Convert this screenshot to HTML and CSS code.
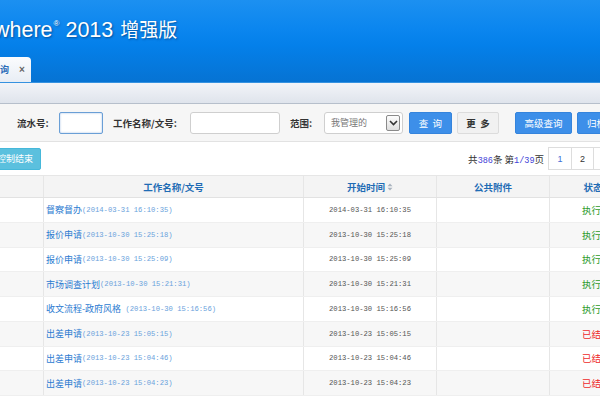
FILE: index.html
```html
<!DOCTYPE html>
<html lang="zh-CN">
<head>
<meta charset="utf-8">
<title>where 2013 增强版</title>
<link rel="stylesheet" href="styles.css">
</head>
<body>
<div class="page">
  <header class="header">
    <div class="title">where<sup class="reg">®</sup> 2013 <span class="title-cn">增强版</span></div>
    <div class="tabs">
      <div class="tab"><span class="tab-text">查询</span><span class="tab-close">×</span></div>
    </div>
  </header>
  <div class="band"></div>
  <div class="toolbar">
    <span class="label lbl-1">流水号:</span>
    <span class="input input-focus input-sn"></span>
    <span class="label lbl-2">工作名称/文号:</span>
    <span class="input input-name"></span>
    <span class="label lbl-3">范围:</span>
    <span class="select"><span class="select-text">我管理的</span><span class="select-arrow"><svg width="9" height="6" viewBox="0 0 9 6"><path d="M1 1 L4.5 4.5 L8 1" fill="none" stroke="#333" stroke-width="1.6"/></svg></span></span>
    <span class="btn btn-blue btn-query">查&nbsp;&nbsp;询</span>
    <span class="btn btn-gray btn-more">更&nbsp;&nbsp;多</span>
    <span class="btn btn-blue btn-adv">高级查询</span>
    <span class="btn btn-blue btn-arch">归档查询</span>
  </div>
  <div class="listbar">
    <span class="btn-info">控制结束</span>
    <div class="pager">
      <span class="pager-info">共<em>386</em>条 第<em>1/39</em>页</span>
      <span class="pg pg-cur">1</span>
      <span class="pg">2</span>
      <span class="pg">3</span>
    </div>
  </div>
  <div class="table">
    <div class="thead">
      <div class="c c0"></div>
      <div class="c c1">工作名称/文号</div>
      <div class="c c2">开始时间<svg class="sort" width="6" height="8" viewBox="0 0 6 8"><path d="M3 0.5 L5.5 3.2 H0.5 Z M3 7.5 L5.5 4.8 H0.5 Z" fill="#a9b3bf"/></svg></div>
      <div class="c c3">公共附件</div>
      <div class="c c4">状态</div>
    </div>
    <div class="row">
      <div class="c c0"></div>
      <div class="c c1"><a class="lnk">督察督办</a><span class="dt">(2014-03-31 16:10:35)</span></div>
      <div class="c c2 tm">2014-03-31 16:10:35</div>
      <div class="c c3"></div>
      <div class="c c4 st-run">执行中</div>
    </div>
    <div class="row">
      <div class="c c0"></div>
      <div class="c c1"><a class="lnk">报价申请</a><span class="dt">(2013-10-30 15:25:18)</span></div>
      <div class="c c2 tm">2013-10-30 15:25:18</div>
      <div class="c c3"></div>
      <div class="c c4 st-run">执行中</div>
    </div>
    <div class="row">
      <div class="c c0"></div>
      <div class="c c1"><a class="lnk">报价申请</a><span class="dt">(2013-10-30 15:25:09)</span></div>
      <div class="c c2 tm">2013-10-30 15:25:09</div>
      <div class="c c3"></div>
      <div class="c c4 st-run">执行中</div>
    </div>
    <div class="row">
      <div class="c c0"></div>
      <div class="c c1"><a class="lnk">市场调查计划</a><span class="dt">(2013-10-30 15:21:31)</span></div>
      <div class="c c2 tm">2013-10-30 15:21:31</div>
      <div class="c c3"></div>
      <div class="c c4 st-run">执行中</div>
    </div>
    <div class="row">
      <div class="c c0"></div>
      <div class="c c1"><a class="lnk">收文流程-政府风格</a><span class="dt"> (2013-10-30 15:16:56)</span></div>
      <div class="c c2 tm">2013-10-30 15:16:56</div>
      <div class="c c3"></div>
      <div class="c c4 st-run">执行中</div>
    </div>
    <div class="row">
      <div class="c c0"></div>
      <div class="c c1"><a class="lnk">出差申请</a><span class="dt">(2013-10-23 15:05:15)</span></div>
      <div class="c c2 tm">2013-10-23 15:05:15</div>
      <div class="c c3"></div>
      <div class="c c4 st-end">已结束</div>
    </div>
    <div class="row">
      <div class="c c0"></div>
      <div class="c c1"><a class="lnk">出差申请</a><span class="dt">(2013-10-23 15:04:46)</span></div>
      <div class="c c2 tm">2013-10-23 15:04:46</div>
      <div class="c c3"></div>
      <div class="c c4 st-end">已结束</div>
    </div>
    <div class="row">
      <div class="c c0"></div>
      <div class="c c1"><a class="lnk">出差申请</a><span class="dt">(2013-10-23 15:04:23)</span></div>
      <div class="c c2 tm">2013-10-23 15:04:23</div>
      <div class="c c3"></div>
      <div class="c c4 st-end">已结束</div>
    </div>
  </div>
</div>
</body>
</html>
```
FILE: styles.css
```css
html, body {
  margin: 0;
  padding: 0;
  background: #ffffff;
}
body {
  width: 600px;
  height: 400px;
  overflow: hidden;
  font-family: "Liberation Sans", "Noto Sans CJK SC", sans-serif;
  color: #333;
}
.page {
  width: 600px;
  overflow: hidden;
}

/* Header */
.header {
  height: 83px;
  display: flex;
  flex-direction: column;
  background: linear-gradient(#1c90f1 0%, #0b86ef 35%, #0480ea 55%, #0673d3 100%);
  border-bottom: 1px solid #3592e0;
  box-sizing: border-box;
}
.title {
  margin-top: 15px;
  margin-left: -6px;
  height: 28px;
  line-height: 28px;
  font-family: "Liberation Sans", "Noto Sans CJK SC", sans-serif;
  font-size: 21.5px;
  color: #ffffff;
  text-shadow: 1px 1px 2px rgba(0, 40, 90, 0.55);
  white-space: nowrap;
}
.reg {
  font-size: 8px;
  vertical-align: 11px;
  line-height: 0;
  margin-left: 1px;
}
.title-cn {
  font-size: 19px;
  font-family: "Noto Sans CJK SC", sans-serif;
  margin-left: 1px;
}
.tabs {
  margin-top: auto;
  display: flex;
}
.tab {
  width: 31px;
  height: 25px;
  box-sizing: border-box;
  background: linear-gradient(#fbfcfe, #e8edf4);
  border-radius: 0 4px 0 0;
  display: flex;
  align-items: center;
  overflow: hidden;
  white-space: nowrap;
}
.tab-text {
  margin-left: -9px;
  font-family: "Noto Sans CJK SC", sans-serif;
  font-size: 9px;
  font-weight: bold;
  color: #2a6cb8;
}
.tab-close {
  margin-left: 10px;
  font-size: 10px;
  color: #666;
  font-weight: bold;
}

.band {
  height: 20px;
  background: linear-gradient(#f2f4f8, #dfe4ec);
  border-bottom: 1px solid #b6bfcb;
}

/* Toolbar */
.toolbar {
  height: 37px;
  display: flex;
  align-items: center;
  background: #f6f6f6;
  border-bottom: 1px solid #e2e2e2;
  padding-left: 17px;
  white-space: nowrap;
  font-family: "Noto Sans CJK SC", sans-serif;
}
.label {
  flex: none;
  font-size: 9.5px;
  font-weight: bold;
  color: #333;
}
.lbl-1 { width: 33px; }
.lbl-2 { width: 69px; margin-left: 10px; }
.lbl-3 { width: 27px; margin-left: 10px; }
.input {
  display: block;
  height: 22px;
  box-sizing: border-box;
  background: #fff;
  border: 1px solid #cfcfcf;
  border-radius: 3px;
  flex: none;
}
.input-focus {
  border: 1px solid #6a9fd6;
  box-shadow: inset 0 0 2px rgba(60, 120, 200, 0.5);
  border-radius: 2px;
}
.input-sn { width: 44px; margin-left: 9px; }
.input-name { width: 90px; margin-left: 8px; }
.select {
  width: 79px;
  height: 22px;
  margin-left: 7px;
  box-sizing: border-box;
  background: #fff;
  border: 1px solid #cfcfcf;
  border-radius: 3px;
  display: flex;
  align-items: center;
  flex: none;
}
.select-text {
  font-size: 9px;
  color: #777;
  margin-left: 6px;
}
.select-arrow {
  margin-left: auto;
  margin-right: 2px;
  width: 14px;
  height: 16px;
  box-sizing: border-box;
  border: 1px solid #8a8a8a;
  border-radius: 2px;
  background: linear-gradient(#fdfdfd, #dedede);
  display: flex;
  align-items: center;
  justify-content: center;
}
.btn {
  height: 22px;
  box-sizing: border-box;
  display: flex;
  align-items: center;
  justify-content: center;
  font-size: 9.5px;
  border-radius: 2px;
  flex: none;
}
.btn-blue {
  background: #3d8fe9;
  border: 1px solid #3584dc;
  color: #fff;
}
.btn-gray {
  background: #f1f1f1;
  border: 1px solid #dcdcdc;
  color: #333;
  font-weight: bold;
}
.btn-query { width: 43px; margin-left: 6px; }
.btn-more { width: 42px; margin-left: 5px; }
.btn-adv { width: 57px; margin-left: 16px; }
.btn-arch { width: 57px; margin-left: 5px; justify-content: flex-start; padding-left: 9px; }

/* List bar */
.listbar {
  height: 33px;
  display: flex;
  align-items: center;
  justify-content: space-between;
  white-space: nowrap;
  font-family: "Noto Sans CJK SC", sans-serif;
}
.btn-info {
  height: 22px;
  width: 52px;
  margin-left: -11px;
  box-sizing: border-box;
  background: #5bc0de;
  border: 1px solid #46b8da;
  border-radius: 2px;
  color: #fff;
  font-size: 9px;
  display: flex;
  align-items: center;
  justify-content: center;
}
.pager {
  display: flex;
  align-items: center;
  margin-right: -16px;
}
.pager-info {
  font-size: 9.5px;
  color: #333;
  margin-right: 5px;
}
.pager-info em {
  font-style: normal;
  font-family: "Liberation Mono", monospace;
  font-size: 8.5px;
  color: #3f3fd8;
}
.pg {
  width: 24px;
  height: 23px;
  box-sizing: border-box;
  border: 1px solid #dddddd;
  margin-left: -1px;
  display: flex;
  align-items: center;
  justify-content: center;
  font-family: "Liberation Sans", sans-serif;
  font-size: 9px;
  color: #333;
  background: #fff;
}
.pg + .pg { width: 23px; }
.pg-cur {
  color: #3d6fd8;
}

/* Table */
.table {
  width: 636px;
  font-family: "Noto Sans CJK SC", sans-serif;
}
.thead, .row {
  display: grid;
  grid-template-columns: 43px 260px 133px 113px 87px;
}
.thead {
  height: 23px;
  background: #f4f4f4;
  border-top: 1px solid #e6e6e6;
  border-bottom: 1px solid #e2e2e2;
  box-sizing: border-box;
}
.thead .c {
  display: flex;
  align-items: center;
  justify-content: center;
  font-size: 9.5px;
  font-weight: bold;
  color: #1f6cb5;
}
.c {
  border-left: 1px solid #e6e6e6;
  white-space: nowrap;
  overflow: hidden;
}
.c0 { border-left: none; }
.sort { margin-left: 2px; }
.row {
  height: 24.75px;
  box-sizing: border-box;
  border-bottom: 1px solid #efefef;
}
.row:nth-child(odd) {
  background: #f7f7f7;
}
.row .c {
  display: flex;
  align-items: center;
}
.row .c1 {
  padding-left: 2px;
}
.lnk {
  font-size: 9px;
  color: #2b7bd1;
}
.dt {
  font-family: "Liberation Mono", monospace;
  font-size: 7.2px;
  color: #6aa2dc;
  white-space: pre;
}
.tm {
  justify-content: center;
  font-family: "Liberation Mono", monospace;
  font-size: 7.2px;
  color: #555;
}
.row .c4 {
  padding-left: 32px;
  font-size: 9.5px;
}
.st-run { color: #2c9b2c; }
.st-end { color: #ee2a2a; }
```
